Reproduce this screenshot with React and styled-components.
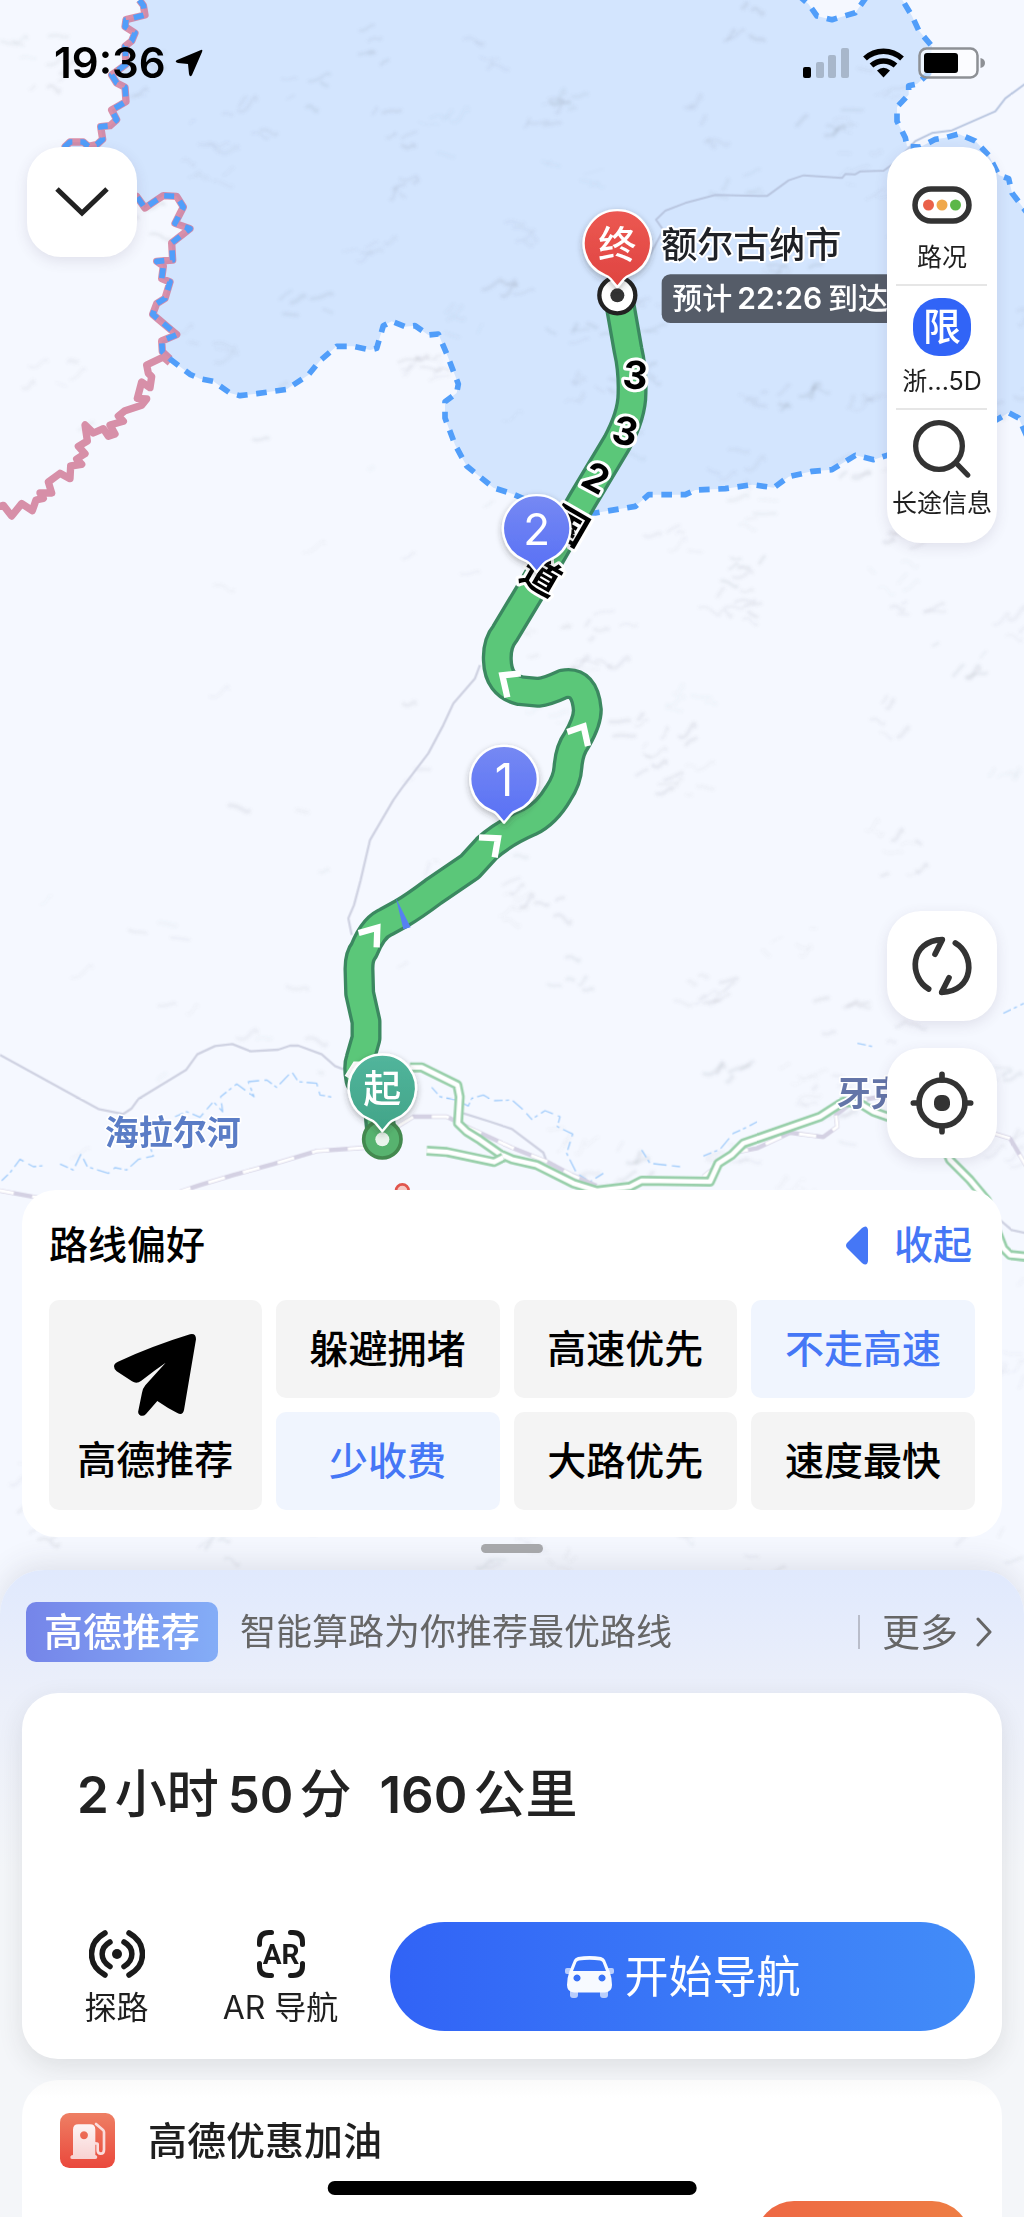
import React from 'react';
import styled, { createGlobalStyle, css } from 'styled-components';

const colors = {
  blue: '#4577f6',
  ink: '#1f1f1f',
  icon: '#333333',
  muted: '#666666',
  tile: '#f4f4f4',
  tileActive: '#f0f5fe',
  land: '#f5f8ff',
  region: '#d3e5fe',
};

const fontStack = 'Inter, "Noto Sans CJK SC", sans-serif';

const GlobalStyle = createGlobalStyle`
  * {
    box-sizing: border-box;
  }
  body {
    margin: 0;
    background: ${colors.land};
    font-family: ${fontStack};
    color: ${colors.ink};
  }
  button {
    margin: 0;
    padding: 0;
    border: 0;
    background: none;
    font: inherit;
    color: inherit;
    cursor: pointer;
  }
  svg {
    display: block;
    flex: none;
  }
`;

const Screen = styled.div`
  position: relative;
  display: flex;
  flex-direction: column;
  height: 100vh;
  min-height: 1900px;
  overflow: hidden;
`;

const MapCanvas = styled.svg`
  position: absolute;
  top: 0;
  left: 0;
  width: 100%;
  height: auto;
`;

const StatusBar = styled.header`
  position: relative;
  display: flex;
  justify-content: space-between;
  align-items: center;
  height: 125px;
  padding: 0 39px 0 54px;
`;

const StatusGroup = styled.div`
  display: flex;
  align-items: center;
  gap: ${(props) => props.$gap};
`;

const Clock = styled.time`
  font-size: 42px;
  line-height: 48px;
  font-weight: 600;
  color: #000;
`;

const MapControls = styled.div`
  position: relative;
  flex: 1;
  display: flex;
  justify-content: space-between;
  align-items: stretch;
  padding: 22px 27px 32px;
`;

const ControlColumn = styled.div`
  display: flex;
  flex-direction: column;
  justify-content: space-between;
`;

const ControlGroup = styled.div`
  display: flex;
  flex-direction: column;
  gap: 27px;
`;

const floating = css`
  background: #fff;
  border-radius: 34px;
  box-shadow: 0 4px 14px rgba(70, 60, 90, 0.12);
`;

const RoundButton = styled.button`
  ${floating}
  width: 110px;
  height: 110px;
  display: flex;
  align-items: center;
  justify-content: center;
`;

const ToolPanel = styled.nav`
  ${floating}
  width: 110px;
  padding: 27px 0 23px;
`;

const Tool = styled.button`
  position: relative;
  width: 100%;
  display: flex;
  flex-direction: column;
  align-items: center;
  justify-content: space-between;
  height: ${(props) => props.$height};
  padding: ${(props) => props.$padding};
  font-size: 25px;
  line-height: 30px;
  white-space: nowrap;
  & + & {
    border-top: 2px solid #e6e6e6;
    border-image: linear-gradient(90deg, #fff 9%, #e6e6e6 9%, #e6e6e6 90%, #fff 90%) 1;
  }
`;

const LimitBadge = styled.span`
  width: 58px;
  height: 58px;
  border-radius: 26px;
  background: #3164f7;
  color: #fff;
  font-size: 38px;
  line-height: 56px;
  font-weight: 500;
  text-align: center;
`;

const Preferences = styled.section`
  position: relative;
  margin: 0 22px;
  padding: 0 27px 27px;
  background: #fff;
  border-radius: 34px;
`;

const PreferencesHeader = styled.div`
  display: flex;
  justify-content: space-between;
  align-items: center;
  height: 110px;
`;

const Title = styled.h2`
  margin: 0;
  font-size: 39px;
  line-height: 48px;
  font-weight: 500;
  color: ${(props) => props.$color || '#000'};
`;

const Collapse = styled.button`
  display: flex;
  align-items: center;
  gap: 26px;
  padding-right: 3px;
  font-size: 39px;
  line-height: 48px;
  font-weight: 500;
  color: ${colors.blue};
`;

const PreferenceGrid = styled.div`
  display: grid;
  grid-template-columns: 213fr 224fr 224fr 224fr;
  grid-template-rows: 98px 98px;
  gap: 14px;
`;

const Preference = styled.button`
  display: flex;
  flex-direction: column;
  align-items: center;
  justify-content: center;
  gap: 20px;
  border-radius: 10px;
  font-size: 39px;
  line-height: 48px;
  font-weight: 500;
  white-space: nowrap;
  color: ${(props) => (props.$active ? colors.blue : '#000')};
  background: ${(props) => (props.$active ? colors.tileActive : colors.tile)};
  ${(props) =>
    props.$tall &&
    css`
      grid-row: span 2;
      padding-top: 8px;
    `}
`;

const Handle = styled.div`
  position: relative;
  align-self: center;
  width: 62px;
  height: 9px;
  margin: 7px 0 17px;
  border-radius: 5px;
  background: #a9aaad;
`;

const Sheet = styled.main`
  position: relative;
  border-radius: 44px 44px 0 0;
  background: linear-gradient(180deg, #e0e9fd 0, #ebeffa 123px, #f4f6f9 300px);
  box-shadow: 0 -6px 30px rgba(60, 60, 70, 0.12);
`;

const SheetHeader = styled.div`
  display: flex;
  align-items: center;
  height: 123px;
  padding: 0 32px 0 26px;
`;

const Badge = styled.span`
  padding: 0 18px;
  border-radius: 10px;
  background: linear-gradient(90deg, #7585e9, #84adf7);
  color: #fff;
  font-size: 39px;
  line-height: 60px;
  font-weight: 500;
`;

const Hint = styled.p`
  flex: 1;
  margin: 0 0 0 22px;
  font-size: 36px;
  line-height: 48px;
  color: ${colors.muted};
`;

const More = styled.button`
  display: flex;
  align-items: center;
  gap: 18px;
  font-size: 38px;
  line-height: 48px;
  color: ${colors.muted};
  &::before {
    content: '';
    width: 2px;
    height: 34px;
    margin-right: 4px;
    background: #b9bdca;
  }
`;

const Card = styled.section`
  margin: 0 22px 21px;
  padding: 0 27px;
  border-radius: 36px;
  background: #fff;
  box-shadow: ${(props) => (props.$raised ? '0 8px 26px rgba(50, 50, 50, 0.11)' : 'none')};
`;

const Summary = styled.p`
  display: flex;
  align-items: baseline;
  gap: 6px;
  margin: 0;
  padding: 66px 0 0 28px;
  height: 229px;
  font-size: 52px;
  line-height: 72px;
  font-weight: 500;
  color: #222;
`;

const Amount = styled.b`
  font-size: 51px;
  font-weight: 600;
  &:not(:first-child) {
    margin-left: ${(props) => (props.$apart ? '22px' : '3px')};
  }
`;

const Actions = styled.div`
  display: flex;
  align-items: center;
  height: 137px;
  padding-bottom: 28px;
`;

const Action = styled.button`
  display: flex;
  flex-direction: column;
  align-items: center;
  gap: 8px;
  width: ${(props) => props.$width};
  padding-top: 6px;
  font-size: 32px;
  line-height: 44px;
  white-space: nowrap;
`;

const StartButton = styled.button`
  flex: 1;
  display: flex;
  align-items: center;
  justify-content: center;
  gap: 11px;
  height: 109px;
  margin-left: 13px;
  border-radius: 55px;
  background: linear-gradient(90deg, #3163f6, #428cf8);
  color: #fff;
  font-size: 44px;
  line-height: 56px;
`;

const FuelCard = styled(Card)`
  display: flex;
  flex-direction: column;
  height: 137px;
  margin-bottom: 0;
  padding: 33px 32px 0 38px;
  border-radius: 36px 36px 0 0;
  background: linear-gradient(180deg, #fafafa, #fff 18px);
  overflow: hidden;
`;

const FuelRow = styled.div`
  display: flex;
  align-items: center;
  gap: 33px;
`;

const FuelButton = styled.button`
  flex: none;
  align-self: flex-end;
  width: 214px;
  height: 76px;
  margin-top: 33px;
  border-radius: 38px;
  background: linear-gradient(90deg, #ee6844, #ee7e44);
`;

const HomeIndicator = styled.div`
  position: absolute;
  left: 50%;
  bottom: 22px;
  width: 36%;
  height: 14px;
  transform: translateX(-50%);
  border-radius: 7px;
  background: #000;
`;

// Outline of the highlighted region, split so that each side can be stroked on its own
const borderWest =
  'M418 0 430 16 435 45 378 59 375 80 405 99 395 123 375 139 378 193 335 225 350 249 375 262 378 305 335 330 350 359 330 377 302 380 308 418 290 434 265 439 250 426 210 426 195 440 230 540 410 589 435 624 470 600 490 587 530 589 550 621 525 670 570 686 515 729 518 780 470 784 490 798 485 836 510 846 495 895 470 911 458 943 530 1004 485 1023 487 1055 510 1077';
const borderSouth =
  '570 1123 600 1136 640 1144 690 1179 720 1187 770 1181 860 1168 925 1125 960 1082 1010 1039 1060 1039 1110 1050 1130 1045 1150 977 1175 964 1215 980 1245 977 1285 1005 1315 1002 1340 1061 1375 1152 1370 1179 1335 1205 1335 1254 1365 1334 1400 1398 1480 1463 1536 1481 1650 1530 1786 1539 1906 1519 1946 1484 2056 1484 2086 1470 2176 1466 2256 1454 2321 1463 2366 1430 2436 1414 2496 1409 2566 1366 2621 1379 2661 1366 2800 1340 2991 1259 3026 1238 3056 1254 3090 1330';
const borderEast =
  '3090 650 3036 579 3026 536 2996 525 2966 466 2926 423 2876 402 2836 413 2806 418 2761 441 2721 439 2716 413 2691 364 2691 321 2726 284 2726 257 2751 252 2786 220 2791 187 2796 139 2756 91 2736 48 2701 -10';
const borderNotch = '2600 -10 2566 38 2496 59 2451 48 2426 13 2400 -10';
const borderPink =
  'M510 1088 490 1071 440 1095 445 1120 455 1130 450 1163 425 1146 412 1195 440 1197 425 1216 375 1232 355 1248 370 1264 330 1275 345 1302 325 1309 310 1286 280 1299 255 1275 262 1323 235 1339 255 1361 230 1377 245 1393 212 1398 210 1436 180 1420 145 1446 155 1479 120 1479 130 1495 108 1500 97 1532 65 1511 35 1548 10 1516 -10 1521';

const routePath =
  'M1143 3400 L1136 3330 1080 3240 Q1072 3200 1080 3178 L1098 3115 1098 3065 1079 2980 1077 2910 Q1076 2870 1092 2850 Q1120 2780 1160 2765 L1205 2740 Q1240 2720 1300 2675 L1410 2600 1460 2545 Q1510 2500 1590 2465 Q1640 2440 1675 2380 Q1702 2340 1704 2300 Q1708 2250 1730 2220 Q1762 2165 1762 2130 Q1755 2040 1690 2052 Q1640 2075 1616 2077 L1560 2072 Q1494 2056 1492 1980 Q1490 1930 1515 1900 L1590 1775 1748 1500 1850 1330 Q1896 1245 1896 1180 Q1898 1110 1884 1050 L1855 886';

const highways = [
  'M1230 3202 1265 3202 1372 3255 1379 3290 1374 3370 1400 3395 1440 3420 1500 3462 1536 3478 1610 3495 1720 3550 1790 3572 1890 3560 1925 3542 2130 3545 2155 3490 2195 3465 2230 3430 2460 3350 2530 3305 2580 3310 2620 3335 2720 3370 2820 3410 2850 3480 2910 3540 2960 3600 2985 3680 3010 3745 3030 3765 3080 3770',
  'M1280 3452 1340 3456 1482 3486 1510 3472',
];
const railways = [
  'M1095 3443 950 3453 820 3492 700 3525 600 3555 540 3575',
  'M-10 3570 120 3594',
  'M1195 3378 1240 3350 1340 3350 1400 3380 1536 3443 1641 3485 1716 3525 1790 3558',
  'M2110 3530 2200 3458 2270 3445 2370 3398 2470 3411 2512 3380 2508 3345 2560 3305 2640 3290',
  'M2980 3400 3030 3415 3080 3500',
];
const roads = [
  'M1440 1995 1425 2035 1360 2110 1330 2175 1285 2260 1205 2365 1180 2400 1110 2520 1082 2640 1062 2715 1045 2755 1055 2805',
  'M0 3165 295 3327 370 3342 395 3325 415 3297 558 3210 592 3163 645 3138 697 3132 752 3154 835 3149 870 3137 895 3137 965 3163 1005 3198 1030 3208',
  'M1390 3340 1470 3365 1536 3387 1630 3458 1640 3485',
  'M3000 3660 3035 3690 3080 3700',
];
const rivers = [
  'M5 3542 30 3518 60 3478 100 3500 130 3497 M180 3492 220 3510 243 3462 262 3500 325 3520 345 3503 380 3510 415 3478 460 3468 450 3440 M525 3350 560 3335 600 3352 640 3305 668 3335 662 3290 710 3252 762 3290 745 3245 800 3240 830 3262 875 3215 895 3245 950 3250 960 3285 1000 3292',
  'M1295 3262 1320 3290 1370 3300 1405 3318 1415 3295 1450 3285 1480 3302 1536 3300 1570 3330 1595 3358 1635 3332 1680 3350 1672 3380 1718 3402 1700 3460 1730 3520 1770 3545 1810 3520',
  'M1925 3450 1950 3490 2040 3500 M2110 3468 2160 3448 2200 3400 2240 3382 2272 3365 M2572 3130 2620 3140 M3010 3040 3072 3010',
];

// Small deterministic generator, so the relief stays the same on every render
const relief = (() => {
  let seed = 7;
  const next = () => {
    seed = (seed * 16807) % 2147483647;
    return seed / 2147483647;
  };
  const marks = [];
  for (let i = 0; i < 190; i += 1) {
    const left = next() * 3072;
    const top = next() * 4750;
    const sparse = left < 1500 && top > 1100 && top < 4000;
    const strength = next() * 0.09 + 0.03;
    const count = sparse ? 1 : 5;
    for (let j = 0; j < count; j += 1) {
      const x = Math.round(left + next() * 150);
      const y = Math.round(top + next() * 110);
      const dx = Math.round(8 + next() * 34);
      const dy = Math.round((next() - 0.65) * 36);
      const bend = Math.round((next() - 0.5) * 26);
      marks.push({
        d: `M${x} ${y} q${Math.round(dx / 2)} ${bend} ${dx} ${dy} t${Math.round(dx / 2)} ${Math.round(dy / 3)}`,
        width: 4 + Math.round(next() * 9),
        opacity: strength,
      });
    }
  }
  return marks;
})();

const routeLabels = [
  { text: '3', x: 1906, y: 1125, turn: 6 },
  { text: '3', x: 1876, y: 1293, turn: 14 },
  { text: '2', x: 1788, y: 1433, turn: 28 },
  { text: '国', x: 1706, y: 1578, turn: 30 },
  { text: '道', x: 1624, y: 1728, turn: 30 },
];

const arrows = [
  'M1437 2512 1494 2515 1484 2572',
  'M1702 2196 1751 2179 1764 2238',
  'M1562 2020 1507 2026 1522 2092',
  'M1076 2799 1132 2783 1130 2842',
  'M1042 3232 1066 3194 1092 3194',
];

const Pin = ({ x, y, text, fill, size, weight = 500 }) => (
  <g transform={`translate(${x} ${y})`}>
    <path
      d='M0 0 L-20 -24 Q-27 -32 -38 -36 A101 101 0 1 1 38 -36 Q27 -32 20 -24 Z'
      fill={`url(#${fill})`}
      stroke='#fff'
      strokeWidth='7'
      strokeLinejoin='round'
      filter='url(#pinShadow)'
    />
    <text y={-128 + size * 0.36} fontSize={size} fontWeight={weight} fill='#fff' textAnchor='middle'>
      {text}
    </text>
  </g>
);

const Gradient = ({ id, from, to }) => (
  <linearGradient id={id} x1='0' y1='0' x2='0' y2='1'>
    <stop offset='0' stopColor={from} />
    <stop offset='1' stopColor={to} />
  </linearGradient>
);

const RouteMap = () => (
  <MapCanvas viewBox='0 0 3072 4800' fontFamily={fontStack} role='img' aria-label='路线地图'>
    <defs>
      <Gradient id='pinRed' from='#ec5852' to='#df4440' />
      <Gradient id='pinBlue' from='#7689f3' to='#5870f5' />
      <Gradient id='pinGreen' from='#52b59c' to='#41a488' />
      <filter id='pinShadow' x='-30%' y='-20%' width='160%' height='160%'>
        <feDropShadow dx='0' dy='8' stdDeviation='9' floodColor='#333' floodOpacity='0.35' />
      </filter>
      <filter id='soft'>
        <feGaussianBlur stdDeviation='4' />
      </filter>
    </defs>
    <rect width='3072' height='4800' fill={colors.land} />
    <path d={`${borderWest} ${borderSouth} ${borderEast} ${borderNotch}Z`} fill={colors.region} />
    <g fill='none' stroke='#6f737c' strokeLinecap='round' filter='url(#soft)'>
      {relief.map((mark) => (
        <path key={mark.d} d={mark.d} strokeWidth={mark.width} opacity={mark.opacity} />
      ))}
    </g>
    <g fill='none' strokeLinejoin='round'>
      {rivers.map((d) => (
        <path key={d} d={d} stroke='#a3cdfb' strokeWidth='4' strokeDasharray='26 9 10 12 40 16' />
      ))}
      <path
        d='M1950 765 1990 690 1968 659 1996 632 2056 609 2146 585 2301 588 2366 541 2411 526 2526 534 2536 522 2566 523 2581 514 2651 512 2686 487 2746 423 2796 399 2856 391 2986 334 3016 295 3080 248'
        stroke='#b9c6e0'
        strokeWidth='6'
      />
      {roads.map((d) => (
        <path key={d} d={d} stroke='#cfd2e2' strokeWidth='7' />
      ))}
      {railways.map((d) => (
        <g key={d}>
          <path d={d} stroke='#d4d1e3' strokeWidth='13' />
          <path d={d} stroke='#fff' strokeWidth='9' strokeDasharray='52 56' />
        </g>
      ))}
      {highways.map((d) => (
        <g key={d}>
          <path d={d} stroke='#98cfaa' strokeWidth='30' />
          <path d={d} stroke='#fff' strokeWidth='14' />
        </g>
      ))}
      <path d={borderWest} stroke='#cf6d8d' strokeWidth='22' opacity='0.75' />
      <path d={borderPink} stroke='#d78fa8' strokeWidth='22' />
      <g stroke='#519efa' strokeWidth='17'>
        <path d={borderWest} strokeDasharray='30 24' />
        <path d={`M510 1077 ${borderSouth}`} strokeDasharray='32 26' />
        <path d={`M${borderEast}`} strokeDasharray='32 26' />
        <path d={`M${borderNotch}`} strokeDasharray='32 26' />
      </g>
    </g>
    <circle cx='1207' cy='3572' r='19' fill='#f6c9c5' stroke='#e0554d' strokeWidth='8' />

    <g fontSize='102' fontWeight='700' stroke='#fff' strokeWidth='10' strokeLinejoin='round' paintOrder='stroke'>
      <text x='314' y='3434' fill='#5b7dc6'>海拉尔河</text>
      <text x='2510' y='3318' fill='#6475a8'>牙克石</text>
    </g>

    <g fill='none' strokeLinejoin='round'>
      <path d={routePath} stroke='#3b8860' strokeWidth='93' />
      <path d={routePath} stroke='#5bc779' strokeWidth='73' />
      {arrows.map((d) => (
        <path key={d} d={d} stroke='#fff' strokeWidth='19' strokeLinejoin='miter' />
      ))}
    </g>
    <path d='M1188 2695 1210 2788 1232 2782Z' fill='#5680f2' />
    <circle cx='1147' cy='3418' r='56' fill='#57b36f' stroke='#43894f' strokeWidth='11' />
    <circle cx='1147' cy='3418' r='21' fill='#eaf4ec' />
    <circle cx='1852' cy='886' r='54' fill='#fff' stroke='#222' strokeWidth='13' />
    <circle cx='1852' cy='886' r='21' fill='#333' />

    {routeLabels.map((label) => (
      <text
        key={`${label.text}${label.y}`}
        transform={`translate(${label.x} ${label.y}) rotate(${label.turn})`}
        y='42'
        fontSize='116'
        fontWeight='700'
        textAnchor='middle'
        stroke='#fff'
        strokeWidth='18'
        strokeLinejoin='round'
        paintOrder='stroke'
      >
        {label.text}
      </text>
    ))}

    <text
      x='1984'
      y='775'
      fontSize='108'
      fontWeight='500'
      fill='#1f2126'
      stroke='#fff'
      strokeWidth='12'
      strokeLinejoin='round'
      paintOrder='stroke'
    >
      额尔古纳市
    </text>
    <rect x='1985' y='823' width='780' height='146' rx='26' fill='#555c68' />
    <text y='927' fontSize='90' fontWeight='500' fill='#fff'>
      <tspan x='2017'>预计</tspan>
      <tspan x='2212' fontWeight='600'>22:26</tspan>
      <tspan x='2484'>到达</tspan>
    </text>

    <Pin x={1852} y={861} text='终' fill='pinRed' size={114} />
    <Pin x={1610} y={1716} text='2' fill='pinBlue' size={132} weight={400} />
    <Pin x={1512} y={2468} text='1' fill='pinBlue' size={136} weight={400} />
    <Pin x={1147} y={3394} text='起' fill='pinGreen' size={114} />
  </MapCanvas>
);

const LocationArrow = () => (
  <svg width='28' height='28' viewBox='0 0 28 28' aria-hidden='true'>
    <path d='M26 1 Q28 0 27 3 L17 26 Q15 29 14 25 L13 15 3 14 Q-1 13 2 11Z' fill='#000' />
  </svg>
);

const Signal = () => (
  <svg width='46' height='30' viewBox='0 0 46 30' aria-hidden='true'>
    <rect y='19' width='8' height='11' rx='2' />
    <g fill='#a8b7cb'>
      <rect x='13' y='14' width='8' height='16' rx='2' />
      <rect x='25' y='7' width='8' height='23' rx='2' />
      <rect x='38' y='0' width='8' height='30' rx='2' />
    </g>
  </svg>
);

const Wifi = () => (
  <svg width='41' height='30' viewBox='0 0 41 30' aria-hidden='true'>
    <g fill='none' stroke='#000' strokeWidth='5.500'>
      <path d='M2 10.500 A27 27 0 0 1 39 10.500' />
      <path d='M8.500 17.500 A18 18 0 0 1 32.500 17.500' />
    </g>
    <path d='M14 22.500 Q20.500 17 27 22.500 L20.500 29.500Z' />
  </svg>
);

const Battery = () => (
  <svg width='67' height='32' viewBox='0 0 67 32' aria-hidden='true'>
    <rect x='1.500' y='1.500' width='58' height='29' rx='7' fill='#fff' fillOpacity='0.6' stroke='#8d9095' strokeWidth='2.500' />
    <rect x='6' y='6' width='34' height='20' rx='3' />
    <path d='M62.500 11 Q67 12 67 16 Q67 20 62.500 21Z' fill='#8d9095' />
  </svg>
);

const ChevronDown = () => (
  <svg width='54' height='32' viewBox='0 0 54 32' aria-hidden='true'>
    <path d='M2 3 27 27 52 3' fill='none' stroke='#222' strokeWidth='5' />
  </svg>
);

const TrafficLight = () => (
  <svg width='60' height='38' viewBox='0 0 60 38' aria-hidden='true'>
    <rect x='3' y='3' width='54' height='32' rx='16' fill='none' stroke={colors.icon} strokeWidth='5.500' />
    <circle cx='16.500' cy='19' r='5.500' fill='#ea6149' />
    <circle cx='30' cy='19' r='5.500' fill='#f0a84c' />
    <circle cx='43.500' cy='19' r='5.500' fill='#5cb748' />
  </svg>
);

const Search = () => (
  <svg width='58' height='58' viewBox='0 0 174 174' aria-hidden='true'>
    <g fill='none' stroke={colors.icon} strokeWidth='16' strokeLinecap='round'>
      <circle cx='78' cy='78' r='70' />
      <path d='M132 132 164 165' />
    </g>
  </svg>
);

const Refresh = () => (
  <svg width='64' height='64' viewBox='-96 -96 192 192' aria-hidden='true'>
    <g fill='none' stroke={colors.icon} strokeWidth='17' strokeLinecap='round' strokeLinejoin='round'>
      <path d='M-40 69 C-100 34 -98 -76 1 -79 L-21 -35' />
      <path d='M40 -69 C100 -34 98 76 -1 79 L21 35' />
    </g>
  </svg>
);

const Locate = () => (
  <svg width='64' height='64' viewBox='-96 -96 192 192' aria-hidden='true'>
    <g fill='none' stroke={colors.icon} strokeWidth='17' strokeLinecap='round'>
      <circle r='69' />
      <path d='M0 -86V-69M0 86V69M-86 0H-69M86 0H69' />
    </g>
    <rect x='-24' y='-24' width='48' height='48' rx='20' fill={colors.icon} />
  </svg>
);

const TriangleLeft = () => (
  <svg width='22' height='39' viewBox='0 0 22 39' aria-hidden='true'>
    <path d='M1 17 L16 2 Q21 -2 22 4 V35 Q21 41 16 37 L1 22 Q-1 19.500 1 17Z' fill={colors.blue} />
  </svg>
);

const PaperPlane = () => (
  <svg width='82' height='82' viewBox='0 0 246 246' aria-hidden='true'>
    <path d='M0 97 Q0 88 12 83 Q120 34 228 1 Q246 -3 246 16 L210 228 Q206 246 190 237 Q160 222 130 201 L96 240 Q86 250 76 242 Q71 238 73 230 L84 176 Q86 164 94 154 L155 86 Q120 110 82 140 Q68 151 54 142 L8 112 Q0 106 0 97Z' />
  </svg>
);

const ChevronRight = () => (
  <svg width='16' height='30' viewBox='0 0 16 30' aria-hidden='true'>
    <path d='M2 2 14 15 2 28' fill='none' stroke={colors.muted} strokeWidth='3' strokeLinecap='round' strokeLinejoin='round' />
  </svg>
);

const Probe = () => (
  <svg width='56' height='48' viewBox='0 0 56 48' aria-hidden='true'>
    <g fill='none' stroke='#1a1a1a' strokeWidth='5.500' strokeLinecap='round'>
      <path d='M16 3 C-2 13 -2 35 16 45' />
      <path d='M21 12 C10.500 18 10.500 30 21 36.500' />
      <path d='M40 3 C58 13 58 35 40 45' />
      <path d='M35 12 C45.500 18 45.500 30 35 36.500' />
    </g>
    <circle cx='28' cy='24' r='5' fill='#1a1a1a' />
  </svg>
);

const ArFrame = () => (
  <svg width='48' height='48' viewBox='0 0 48 48' aria-hidden='true'>
    <path
      d='M2.500 14.500 V12 Q2.500 2.500 12 2.500 H14.500 M33.500 2.500 H36 Q45.500 2.500 45.500 12 V14.500 M45.500 33.500 V36 Q45.500 45.500 36 45.500 H33.500 M14.500 45.500 H12 Q2.500 45.500 2.500 36 V33.500'
      fill='none'
      stroke='#1a1a1a'
      strokeWidth='5'
      strokeLinecap='round'
    />
    <text x='24' y='34' fontFamily='Roboto, sans-serif' fontSize='28' fontWeight='700' fill='#1a1a1a' textAnchor='middle'>
      AR
    </text>
  </svg>
);

const Car = () => (
  <svg width='49' height='42' viewBox='0 0 49 42' aria-hidden='true'>
    <g fill='#fff' fillOpacity='0.65'>
      <rect x='5' y='32' width='8' height='10' rx='3' />
      <rect x='35' y='32' width='8' height='10' rx='3' />
      <rect y='12' width='7' height='6' rx='2' />
      <rect x='42' y='12' width='7' height='6' rx='2' />
    </g>
    <path
      fillRule='evenodd'
      fill='#f7faff'
      d='M13 1 Q24.500 -1 36 1 Q39 2 40 4 L44.500 15 Q47 22 47 29 Q47 36 40 36.500 H9 Q2 36 2 29 Q2 22 4.500 15 L9 4 Q10 2 13 1Z M14 4.500 Q12 5 11.500 6 L8 15 H41 L37.500 6 Q37 5 35 4.500 Q24.500 3 14 4.500Z M12 18.500 a3.500 3.500 0 1 0 .01 0Z M37 18.500 a3.500 3.500 0 1 0 .01 0Z'
    />
  </svg>
);

const FuelPump = () => (
  <svg width='55' height='55' viewBox='0 0 165 165' aria-hidden='true'>
    <defs>
      <Gradient id='fuel' from='#ee7f64' to='#ea483c' />
      <Gradient id='pump' from='#fdf3f3' to='#f8d2d2' />
    </defs>
    <rect width='165' height='165' rx='28' fill='url(#fuel)' />
    <path
      fillRule='evenodd'
      fill='url(#pump)'
      d='M39 50 Q39 34 55 34 H90 Q106 34 106 50 V126 Q112 127 112 132 Q112 138 106 138 H36 Q30 138 31 131 Q32 127 39 126Z M72 55 a12 12 0 1 0 .01 0Z'
    />
    <path
      d='M108 33 L130 52 Q132 54 132 58 V110 Q132 122 122 122 Q113 122 113 112 V94 Q113 91 106 91'
      fill='none'
      stroke='#fadcdc'
      strokeWidth='8'
      strokeLinecap='round'
    />
  </svg>
);

const preferences = [
  { label: '高德推荐', tall: true },
  { label: '躲避拥堵' },
  { label: '高速优先' },
  { label: '不走高速', active: true },
  { label: '少收费', active: true },
  { label: '大路优先' },
  { label: '速度最快' },
];

const App = () => (
  <Screen>
    <GlobalStyle />
    <RouteMap />

    <StatusBar>
      <StatusGroup $gap='9px'>
        <Clock>19:36</Clock>
        <LocationArrow />
      </StatusGroup>
      <StatusGroup $gap='14px'>
        <Signal />
        <Wifi />
        <Battery />
      </StatusGroup>
    </StatusBar>

    <MapControls>
      <RoundButton aria-label='返回'>
        <ChevronDown />
      </RoundButton>
      <ControlColumn>
        <ToolPanel>
          <Tool $height='110px' $padding='12px 0 12px'>
            <TrafficLight />
            路况
          </Tool>
          <Tool $height='124px' $padding='12px 0 12px'>
            <LimitBadge>限</LimitBadge>
            浙...5D
          </Tool>
          <Tool $height='112px' $padding='10px 0 2px'>
            <Search />
            长途信息
          </Tool>
        </ToolPanel>
        <ControlGroup>
          <RoundButton aria-label='刷新'>
            <Refresh />
          </RoundButton>
          <RoundButton aria-label='定位'>
            <Locate />
          </RoundButton>
        </ControlGroup>
      </ControlColumn>
    </MapControls>

    <Preferences>
      <PreferencesHeader>
        <Title>路线偏好</Title>
        <Collapse>
          <TriangleLeft />
          收起
        </Collapse>
      </PreferencesHeader>
      <PreferenceGrid>
        {preferences.map(({ label, tall, active }) => (
          <Preference key={label} $tall={tall} $active={active} aria-pressed={Boolean(active)}>
            {tall && <PaperPlane />}
            {label}
          </Preference>
        ))}
      </PreferenceGrid>
    </Preferences>
    <Handle />

    <Sheet>
      <SheetHeader>
        <Badge>高德推荐</Badge>
        <Hint>智能算路为你推荐最优路线</Hint>
        <More>
          更多
          <ChevronRight />
        </More>
      </SheetHeader>
      <Card $raised>
        <Summary>
          <Amount>2</Amount>小时<Amount>50</Amount>分<Amount $apart>160</Amount>公里
        </Summary>
        <Actions>
          <Action $width='135px'>
            <Probe />
            探路
          </Action>
          <Action $width='193px'>
            <ArFrame />
            AR 导航
          </Action>
          <StartButton>
            <Car />
            开始导航
          </StartButton>
        </Actions>
      </Card>
      <FuelCard>
        <FuelRow>
          <FuelPump />
          <Title $color={colors.ink}>高德优惠加油</Title>
        </FuelRow>
        <FuelButton aria-label='去加油' />
      </FuelCard>
    </Sheet>
    <HomeIndicator />
  </Screen>
);

export default App;
